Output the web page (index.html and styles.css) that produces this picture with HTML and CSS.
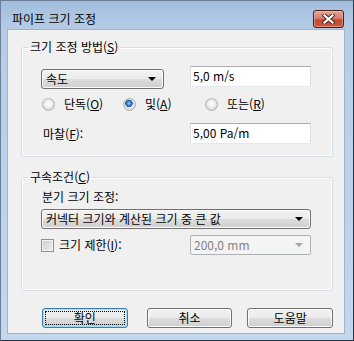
FILE: index.html
```html
<!DOCTYPE html>
<html lang="ko">
<head>
    <meta charset="UTF-8">
    <title>파이프 크기 조정</title>
    <link rel="stylesheet" href="styles.css">
</head>
<body>

    <div class="window">
        <div class="titlebar">
            <span class="title">파이프 크기 조정</span>
            <span class="close-btn">
                <svg width="13" height="10" viewBox="0 0 13 10">
                    <path d="M2.5 1.5 L10.5 8.5 M10.5 1.5 L2.5 8.5" stroke="#4a2a26" stroke-width="4.2" stroke-linecap="square" fill="none"/>
                    <path d="M2.5 1.5 L10.5 8.5 M10.5 1.5 L2.5 8.5" stroke="#ffffff" stroke-width="2.2" stroke-linecap="square" fill="none"/>
                </svg>
            </span>
        </div>

        <div class="client">
            <!-- 크기 조정 방법 -->
            <fieldset class="group group-method">
                <legend>크기 조정 방법(<u>S</u>)</legend>
                <div class="row row-top">
                    <div class="combo combo-speed"><span>속도</span><i class="arrow"></i></div>
                    <div class="field">5,0 m/s</div>
                </div>
                <div class="row row-radio">
                    <label class="opt opt-1"><span class="radio"></span>단독(<u>O</u>)</label>
                    <label class="opt opt-2"><span class="radio checked"></span>및(<u>A</u>)</label>
                    <label class="opt opt-3"><span class="radio"></span>또는(<u>R</u>)</label>
                </div>
                <div class="row row-friction">
                    <span class="caption">마찰(<u>F</u>):</span>
                    <div class="field">5,00 Pa/m</div>
                </div>
            </fieldset>

            <!-- 구속조건 -->
            <fieldset class="group group-limit">
                <legend>구속조건(<u>C</u>)</legend>
                <div class="sub-caption">분기 크기 조정:</div>
                <div class="combo combo-wide"><span>커넥터 크기와 계산된 크기 중 큰 값</span><i class="arrow"></i></div>
                <div class="row row-check">
                    <label class="check-label"><span class="checkbox"></span>크기 제한(<u>I</u>):</label>
                    <div class="combo combo-disabled"><span>200,0 mm</span><i class="arrow"></i></div>
                </div>
            </fieldset>

            <div class="buttons">
                <button class="btn btn-default"><span>확인</span></button>
                <button class="btn btn-cancel">취소</button>
                <button class="btn btn-help">도움말</button>
            </div>
        </div>
    </div>

</body>
</html>
```

FILE: styles.css
```css
body {
    margin: 0;
    font-family: "Noto Sans CJK KR", sans-serif;
    font-size: 12px;
    color: #000;
    background: #ffffff;
}
u {
    text-decoration: underline;
    text-underline-offset: 1px;
}
.window {
    width: 354px;
    height: 341px;
    box-sizing: border-box;
    border: 1px solid #6c7f96;
    border-right-color: #2d3540;
    border-bottom-color: #2d3540;
    background: linear-gradient(to bottom, #a2bedc 0, #b6cde7 30px, #c3d7ed 100%);
    padding: 0 9px 0 7px;
}
.titlebar {
    height: 29px;
    display: flex;
    justify-content: space-between;
    align-items: flex-start;
    padding-left: 4px;
}
.title {
    margin-top: 10px;
    line-height: 16px;
    color: #000;
}
.close-btn {
    margin-top: 9px;
    width: 29px;
    height: 16px;
    border: 1px solid #4b1b16;
    border-radius: 3px;
    background: linear-gradient(to bottom, #e4a596 0, #d7806d 45%, #c24a31 55%, #c9573d 100%);
    box-shadow: inset 0 0 0 1px rgba(255, 210, 200, 0.45);
    display: flex;
    align-items: center;
    justify-content: center;
}
.client {
    height: 303px;
    background: #f0f0f0;
    box-shadow: 0 0 0 1px #9fb4cc;
    padding: 9px 11px 0 13px;
    box-sizing: border-box;
}
.group {
    margin: 0;
    padding: 0 0 0 19px;
    border: 1px solid #d5dfe5;
    border-radius: 3px;
    box-shadow: inset 0 0 0 1px #ffffff;
}
.group legend {
    padding: 0 2px;
    margin-left: -13px;
    line-height: 16px;
}
.group-method {
    padding-top: 11px;
    padding-bottom: 12px;
}
.group-limit {
    margin-top: 12px;
    padding-top: 5px;
    padding-bottom: 35px;
}
.row {
    display: flex;
    align-items: center;
}
.row-top {
    align-items: flex-start;
}
.combo {
    height: 20px;
    box-sizing: border-box;
    border: 1px solid #707070;
    border-radius: 3px;
    background: linear-gradient(to bottom, #f2f2f2 0, #ebebeb 50%, #dddddd 50%, #cfcfcf 100%);
    box-shadow: inset 0 0 0 1px #fbfbfb;
    display: flex;
    align-items: center;
    justify-content: space-between;
    padding: 0 7px 0 4px;
    line-height: 16px;
}
.arrow {
    width: 0;
    height: 0;
    border-left: 4px solid transparent;
    border-right: 4px solid transparent;
    border-top: 4px solid #000;
}
.combo-speed {
    width: 123px;
    margin-top: 3px;
}
.field {
    width: 121px;
    height: 21px;
    box-sizing: border-box;
    background: #fff;
    border: 1px solid #dbdfe6;
    border-top-color: #abadb3;
    border-bottom-color: #e3e9ef;
    padding-left: 2px;
    line-height: 18px;
    margin-left: auto;
    margin-right: 21px;
}
.row-radio {
    margin-top: 8px;
    height: 14px;
}
.opt {
    display: flex;
    align-items: center;
    line-height: 14px;
}
.opt-1 { width: 81px; padding-left: 1px; }
.opt-2 { width: 82px; }
.radio {
    width: 11px;
    height: 11px;
    border-radius: 50%;
    border: 1px solid #b3b3b3;
    background: radial-gradient(circle at 50% 45%, #ffffff 0, #f2f2f2 3px, #d6d6d6 6px);
    margin-right: 9px;
}
.radio.checked {
    background:
        radial-gradient(circle at 45% 40%, #a8d3fb 0, #3b82d2 2px, #1e5aa5 3.5px, rgba(30, 90, 165, 0) 4px),
        radial-gradient(circle at 50% 45%, #ffffff 0, #f2f2f2 3px, #d6d6d6 6px);
}
.row-friction {
    margin-top: 12px;
}
.caption {
    line-height: 16px;
    padding-left: 2px;
}
.sub-caption {
    line-height: 14px;
    padding-left: 1px;
}
.combo-wide {
    width: 270px;
    margin-top: 5px;
}
.row-check {
    margin-top: 6px;
}
.check-label {
    display: flex;
    align-items: center;
    line-height: 16px;
}
.checkbox {
    width: 11px;
    height: 11px;
    border: 1px solid #8f8f8f;
    background: linear-gradient(135deg, #c9c9c9 0, #f3f3f3 100%);
    box-shadow: inset 0 0 0 1px #f4f4f4;
    margin-right: 5px;
}
.combo-disabled {
    width: 121px;
    margin-left: auto;
    margin-right: 21px;
    border-color: #adb2b5;
    border-radius: 2px;
    background: #f4f4f4;
    box-shadow: none;
    color: #838383;
    padding-left: 3px;
}
.combo-disabled .arrow {
    border-top-color: #a6a6a6;
}
.buttons {
    display: flex;
    margin-top: 17px;
    padding-left: 21px;
}
.btn {
    width: 86px;
    height: 20px;
    box-sizing: border-box;
    border: 1px solid #707070;
    border-radius: 3px;
    background: linear-gradient(to bottom, #f2f2f2 0, #ebebeb 50%, #dddddd 50%, #cfcfcf 100%);
    box-shadow: inset 0 0 0 1px #fbfbfb;
    font-family: "Noto Sans CJK KR", sans-serif;
    font-size: 12px;
    line-height: 16px;
    color: #000;
    padding: 0;
    margin: 0;
}
.btn-default {
    border-color: #3c7fb1;
    box-shadow: inset 0 0 0 1px #9fdcf5;
    outline: 1px dotted #000;
    outline-offset: -4px;
}
.btn-cancel {
    margin-left: 19px;
}
.btn-help {
    margin-left: 15px;
}
```
